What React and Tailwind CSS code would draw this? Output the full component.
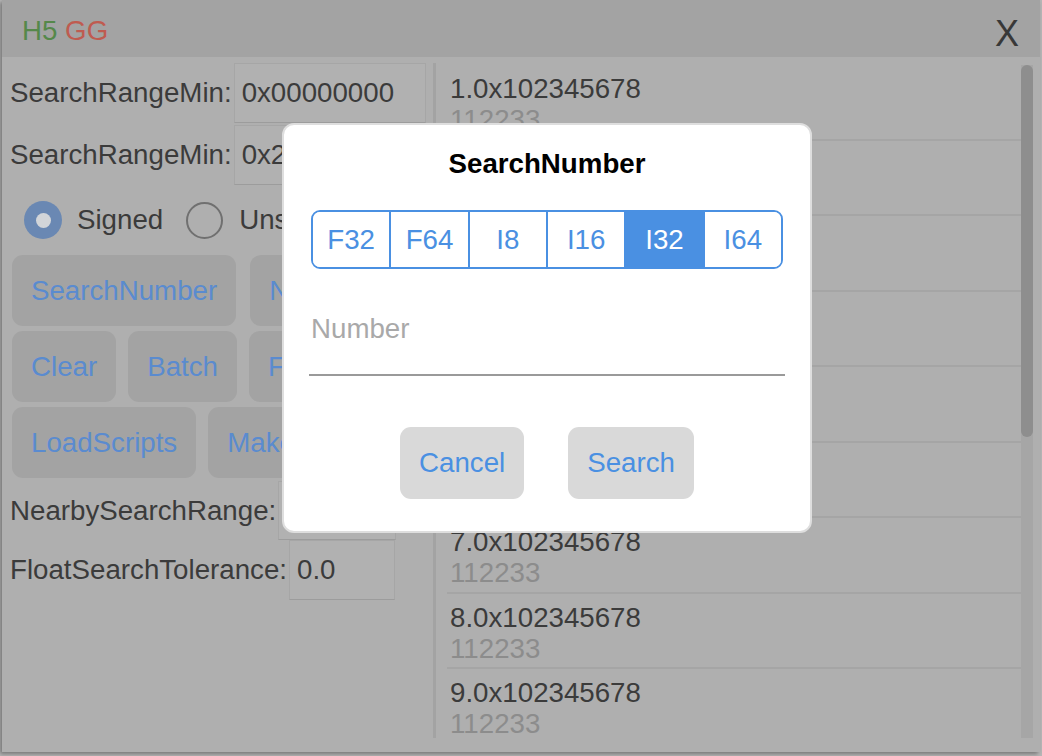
import { useState } from 'react'

const types = ['F32', 'F64', 'I8', 'I16', 'I32', 'I64']

const results = Array.from({ length: 9 }, (_, i) => ({
  addr: `${i + 1}.0x102345678`,
  value: '112233',
}))

const Field = ({ label, value, width }) => (
  <div className="flex h-full items-center">
    <span className="mr-[2px] whitespace-nowrap">{label}</span>
    <div
      className="flex h-full items-center border border-[#a6a6a6] border-b-[#9c9c9c] bg-[#b1b1b1] px-[7px] whitespace-nowrap overflow-hidden"
      style={{ width }}
    >
      {value}
    </div>
  </div>
)

const GrayButton = ({ children }) => (
  <div className="flex h-[71px] shrink-0 items-center rounded-[11px] bg-[#a3a3a3] px-[19px] text-[#5a8bcf] whitespace-nowrap">
    {children}
  </div>
)

export default function App() {
  const [type, setType] = useState('I32')
  const [num, setNum] = useState('')

  return (
    <div className="relative h-[756px] w-[1042px] overflow-hidden bg-[#b6b6b6] font-['Liberation_Sans',Arial,sans-serif] text-[27.7px] text-[#3b3b3b]">
      {/* window */}
      <div className="ml-[2px] flex h-[752px] w-[1038px] flex-col bg-[#afafaf] shadow-[-2px_2px_4px_rgba(0,0,0,0.35)]">
        <div className="flex h-[57px] shrink-0 items-center justify-between bg-[#a3a3a3] pl-[20px] pr-[21px]">
          <div className="pt-[4px] leading-none">
            <span className="text-[#55884a]">H5</span> <span className="text-[#bf5b50]">GG</span>
          </div>
          <div className="pt-[11px] text-[36px] leading-none text-[#383838]">X</div>
        </div>

        <div className="flex min-h-0 flex-1 pt-[6px] pb-[14px]">
          {/* left panel */}
          <div className="flex w-[431px] shrink-0 flex-col overflow-hidden pl-[8px]">
            <div className="h-[60px] shrink-0">
              <Field label="SearchRangeMin:" value="0x00000000" width={192} />
            </div>
            <div className="mt-[2px] h-[60px] shrink-0">
              <Field label="SearchRangeMin:" value="0x20000000" width={192} />
            </div>

            <div className="flex h-[70px] shrink-0 items-center pl-[14px]">
              <div className="flex h-[38px] w-[38px] items-center justify-center rounded-full bg-[#6a88b3]">
                <div className="h-[15px] w-[15px] rounded-full bg-[#d2d5d9]"></div>
              </div>
              <span className="ml-[15px]">Signed</span>
              <div className="ml-[23px] h-[37px] w-[37px] rounded-full border-2 border-[#707070]"></div>
              <span className="ml-[16px]">Unsigned</span>
            </div>

            <div className="flex shrink-0 flex-col gap-[5px] pl-[2px]">
              <div className="flex gap-[14px]">
                <GrayButton>SearchNumber</GrayButton>
                <GrayButton>NearbySearch</GrayButton>
              </div>
              <div className="flex gap-[12px]">
                <GrayButton>Clear</GrayButton>
                <GrayButton>Batch</GrayButton>
                <GrayButton>Freeze</GrayButton>
              </div>
              <div className="flex gap-[12px]">
                <GrayButton>LoadScripts</GrayButton>
                <GrayButton>MakeScripts</GrayButton>
              </div>
            </div>

            <div className="mt-[3px] h-[59px] shrink-0">
              <Field label="NearbySearchRange:" value="" width={118} />
            </div>
            <div className="h-[60px] shrink-0">
              <Field label="FloatSearchTolerance:" value="0.0" width={106} />
            </div>
          </div>

          {/* results list */}
          <div className="w-[3px] shrink-0 bg-[#a3a3a3]"></div>
          <div className="flex min-w-0 flex-1 pt-[2px] pr-[7px]">
            <div className="min-w-0 flex-1 overflow-hidden pl-[11px]">
              {results.map((r) => (
                <div key={r.addr} className="h-[75.5px] shrink-0 border-b-2 border-[#a5a5a5] pt-[8px]">
                  <div className="pl-[3px] leading-[31px] text-[#3b3b3b]">{r.addr}</div>
                  <div className="pl-[3px] leading-[31px] text-[#8c8c8c]">{r.value}</div>
                </div>
              ))}
            </div>
            <div className="relative w-[12px] shrink-0 bg-[#a6a6a6]">
              <div className="absolute left-0 top-0 h-[372px] w-[12px] rounded-full bg-[#8e8e8e]"></div>
            </div>
          </div>
        </div>
      </div>

      {/* dialog */}
      <div className="absolute left-[282px] top-[123px] flex h-[410px] w-[530px] flex-col rounded-[12px] border-2 border-[#dedede] bg-white px-[25px] pt-[22px]">
        <div className="text-center font-bold leading-[34px] text-black">SearchNumber</div>
        <div className="mx-[2px] mt-[29px] flex h-[59px] overflow-hidden rounded-[9px] border-2 border-[#4a90e2]">
          {types.map((t, i) => (
            <button
              key={t}
              onClick={() => setType(t)}
              className={`flex flex-1 items-center justify-center ${i > 0 ? 'border-l-2 border-[#4a90e2]' : ''} ${
                type === t ? 'bg-[#4a90e2] text-white' : 'bg-white text-[#4a90e2]'
              }`}
            >
              {t}
            </button>
          ))}
        </div>
        <input
          value={num}
          onChange={(e) => setNum(e.target.value)}
          placeholder="Number"
          className="mt-[30px] h-[77px] w-full border-b-2 border-[#9a9a9a] pb-[15px] pl-[2px] text-[#333] outline-none placeholder:text-[#a9a9a9]"
        />
        <div className="mt-[51px] flex justify-center gap-[44px]">
          <button className="h-[72px] rounded-[11px] bg-[#d9d9d9] px-[19px] text-[#4a90e2]">Cancel</button>
          <button className="h-[72px] rounded-[11px] bg-[#d9d9d9] px-[19px] text-[#4a90e2]">Search</button>
        </div>
      </div>
    </div>
  )
}
